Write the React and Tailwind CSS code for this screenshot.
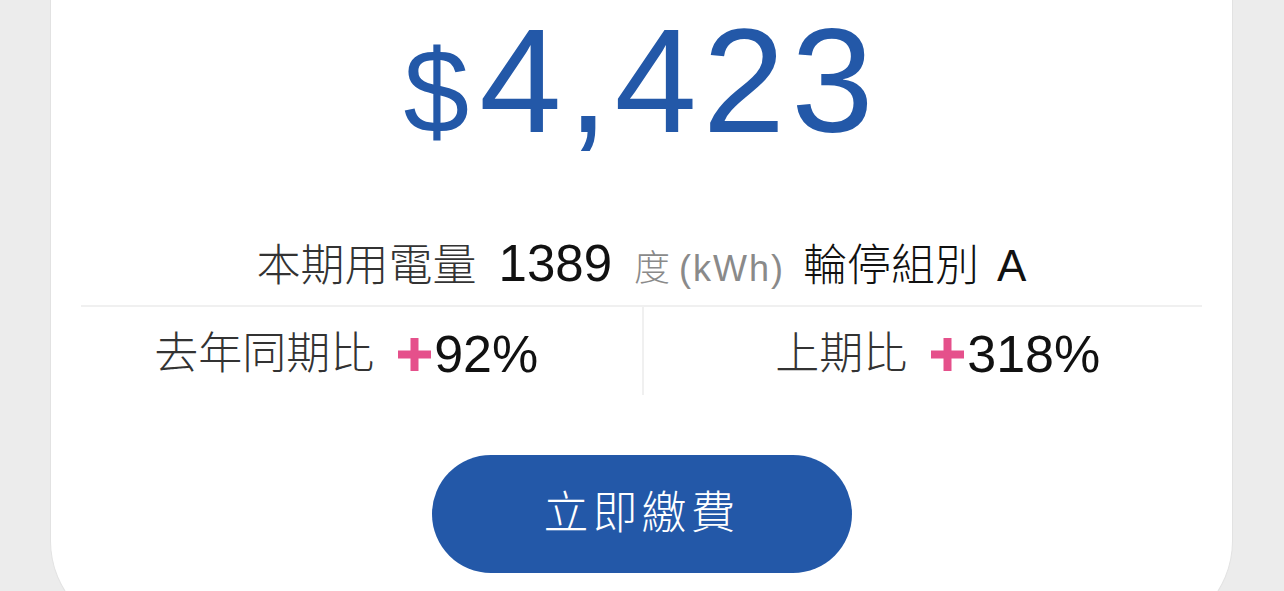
import React from "react";

const FONT = { fontFamily: '"Liberation Sans", "Noto Sans CJK TC", sans-serif' };

function Plus() {
  return (
    <svg width="33" height="33" viewBox="0 0 33 33" className="block">
      <rect x="0" y="12.5" width="33" height="8" fill="#e5508b" />
      <rect x="12.5" y="0" width="8" height="33" fill="#e5508b" />
    </svg>
  );
}

export default function App() {
  return (
    <div className="h-[591px] w-full overflow-hidden bg-[#ececec]" style={FONT}>
      <div className="ml-[50px] w-[1183px] rounded-b-[94px] border border-t-0 border-[#e2e2e2] bg-white pb-[61px]">
        <div className="flex h-[155px] items-baseline justify-center pt-[7px] leading-none text-[#2358a8]">
          <span className="mr-[10px] text-[118px]">$</span>
          <span className="text-[148px] tracking-[6px]">4,423</span>
        </div>

        <div className="mt-[83px] flex h-[52px] items-baseline justify-center leading-none">
          <span className="text-[44px] font-light text-[#333333]">本期用電量</span>
          <span className="ml-[22px] text-[51px] text-[#111111]">1389</span>
          <span className="ml-[22px] text-[36px] font-light text-[#8a8a8a]">度</span>
          <span className="ml-[9px] text-[36px] tracking-[2px] text-[#8a8a8a]">(kWh)</span>
          <span className="ml-[18px] text-[44px] font-light text-[#111111]">輪停組別</span>
          <span className="ml-[18px] text-[44px] text-[#111111]">A</span>
        </div>

        <div className="mx-[30px] mt-[15px] h-[2px] bg-[#f0f0f0]" />

        <div className="grid h-[88px] grid-cols-2">
          <div className="flex items-center justify-center pt-[6px]">
            <span className="text-[44px] font-light leading-none text-[#333333]">去年同期比</span>
            <span className="ml-[24px] mr-[3px]"><Plus /></span>
            <span className="text-[52px] leading-none text-[#111111]">92%</span>
          </div>
          <div className="flex items-center justify-center border-l-2 border-[#f0f0f0] pt-[6px]">
            <span className="text-[44px] font-light leading-none text-[#333333]">上期比</span>
            <span className="ml-[24px] mr-[3px]"><Plus /></span>
            <span className="text-[52px] leading-none text-[#111111]">318%</span>
          </div>
        </div>

        <div className="mt-[60px] flex justify-center">
          <button className="flex h-[118px] w-[420px] items-center justify-center rounded-full bg-[#2358a8] text-[45px] font-light tracking-[4px] text-white">
            立即繳費
          </button>
        </div>
      </div>
    </div>
  );
}
